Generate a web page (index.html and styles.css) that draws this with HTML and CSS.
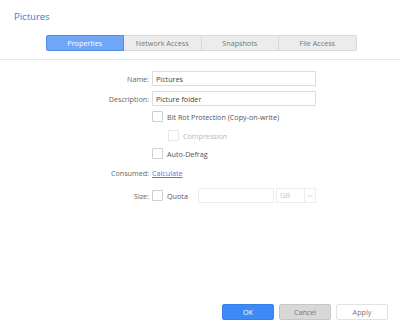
FILE: index.html
```html
<!DOCTYPE html>
<html lang="en">
<head>
    <meta charset="UTF-8">
    <title>Pictures</title>
    <link rel="stylesheet" href="styles.css">
</head>
<body>
    <div class="window">
        <div class="title">Pictures</div>

        <div class="tab-bar">
            <div class="tabs">
                <div class="tab active">Properties</div>
                <div class="tab">Network Access</div>
                <div class="tab">Snapshots</div>
                <div class="tab">File Access</div>
            </div>
        </div>

        <div class="form">
            <div class="row field">
                <label class="label">Name:</label>
                <input class="text-input" type="text" value="Pictures">
            </div>
            <div class="row field">
                <label class="label">Description:</label>
                <input class="text-input" type="text" value="Picture folder">
            </div>

            <div class="row check-row first">
                <span class="label"></span>
                <span class="box"></span>
                <span class="check-text">Bit Rot Protection (Copy-on-write)</span>
            </div>
            <div class="row check-row sub disabled">
                <span class="label"></span>
                <span class="box"></span>
                <span class="check-text">Compression</span>
            </div>
            <div class="row check-row">
                <span class="label"></span>
                <span class="box"></span>
                <span class="check-text">Auto-Defrag</span>
            </div>

            <div class="row consumed">
                <span class="label">Consumed:</span>
                <a class="link" href="#">Calculate</a>
            </div>

            <div class="row size">
                <span class="label">Size:</span>
                <span class="box"></span>
                <span class="check-text quota">Quota</span>
                <input class="quota-input" type="text" disabled>
                <div class="unit-select">
                    <span class="unit">GB</span>
                    <span class="arrow">
                        <svg width="6" height="4" viewBox="0 0 6 4"><path d="M0.5 0.5 L3 3 L5.5 0.5" fill="none" stroke="#c8c8c8" stroke-width="0.8"/></svg>
                    </span>
                </div>
            </div>
        </div>

        <div class="footer">
            <button class="btn btn-ok">OK</button>
            <button class="btn btn-cancel">Cancel</button>
            <button class="btn btn-apply">Apply</button>
        </div>
    </div>
</body>
</html>
```

FILE: styles.css
```css
body {
    margin: 0;
    font-family: 'Open Sans', 'Noto Sans', sans-serif;
    background: #fff;
}

.window {
    height: 334px;
    display: flex;
    flex-direction: column;
}

/* title */
.title {
    padding: 11px 0 0 14px;
    font-size: 9.5px;
    line-height: 12px;
    color: #3b78d4;
}

/* tabs */
.tab-bar {
    margin-top: 12px;
    padding-bottom: 8px;
    border-bottom: 1px solid #e8e8e8;
    display: flex;
    justify-content: center;
}

    .tabs {
        display: flex;
        width: 311px;
        margin-left: 2px;
    }

    .tab {
        flex: 1;
        height: 14px;
        line-height: 14px;
        text-align: center;
        font-size: 7.2px;
        color: #777;
        background: #ececec;
        border: 1px solid #d8d8d8;
        margin-left: -1px;
    }

        .tab:first-child {
            margin-left: 0;
            border-radius: 2px 0 0 2px;
        }

        .tab:last-child {
            border-radius: 0 2px 2px 0;
        }

        .tab.active {
            background: #6fa7f6;
            border-color: #4f8fe9;
            color: #fff;
            position: relative;
        }

/* form */
.form {
    padding-top: 11px;
}

.row {
    display: flex;
    align-items: center;
    font-size: 7.2px;
    color: #666;
}

    .row .label {
        width: 149px;
        padding-right: 3px;
        text-align: right;
        flex: none;
    }

.field {
    margin-bottom: 5px;
}

.text-input {
    box-sizing: border-box;
    width: 164px;
    height: 15px;
    border: 1px solid #dcdcdc;
    border-radius: 1px;
    padding: 0 3px;
    font-family: inherit;
    font-size: 7.2px;
    color: #444;
    outline: none;
}

.box {
    box-sizing: border-box;
    width: 11px;
    height: 11px;
    border: 1px solid #cfcfcf;
    border-radius: 1px;
    background: #fff;
    flex: none;
}

.check-text {
    margin-left: 4px;
    color: #555;
}

.check-row {
    height: 11px;
    margin-bottom: 8px;
}

    .check-row.first {
        margin-top: 5px;
    }

    .check-row.sub {
        padding-left: 16px;
        margin-bottom: 7px;
    }

    .check-row.disabled .box {
        border-color: #e6e6e6;
    }

    .check-row.disabled .check-text {
        color: #b8b8b8;
    }

.consumed {
    margin-top: 6px;
    height: 12px;
}

.link {
    color: #3c84e6;
    text-decoration: underline;
}

.size {
    margin-top: 9px;
    height: 15px;
}

.quota {
    width: 28px;
}

.quota-input {
    box-sizing: border-box;
    width: 76px;
    height: 15px;
    border: 1px solid #ececec;
    background: #fff;
    margin-left: 3px;
    outline: none;
}

.unit-select {
    box-sizing: border-box;
    display: flex;
    width: 40px;
    height: 15px;
    margin-left: 2px;
    border: 1px solid #ececec;
    color: #c4c4c4;
}

    .unit-select .unit {
        flex: 1;
        padding-left: 3px;
        line-height: 13px;
    }

    .unit-select .arrow {
        width: 10px;
        border-left: 1px solid #ececec;
        display: flex;
        align-items: center;
        justify-content: center;
    }

/* footer buttons */
.footer {
    margin-top: auto;
    padding: 0 12px 14px 0;
    display: flex;
    justify-content: flex-end;
    gap: 5px;
}

.btn {
    box-sizing: border-box;
    width: 52px;
    height: 16px;
    border-radius: 2px;
    font-family: inherit;
    font-size: 7.2px;
    padding: 0;
    cursor: pointer;
}

.btn-ok {
    background: #3d8bf6;
    border: 1px solid #357fe6;
    color: #fff;
}

.btn-cancel {
    background: #d8d8d8;
    border: 1px solid #c8c8c8;
    color: #777;
}

.btn-apply {
    background: #fff;
    border: 1px solid #e2e2e2;
    color: #777;
}
```
